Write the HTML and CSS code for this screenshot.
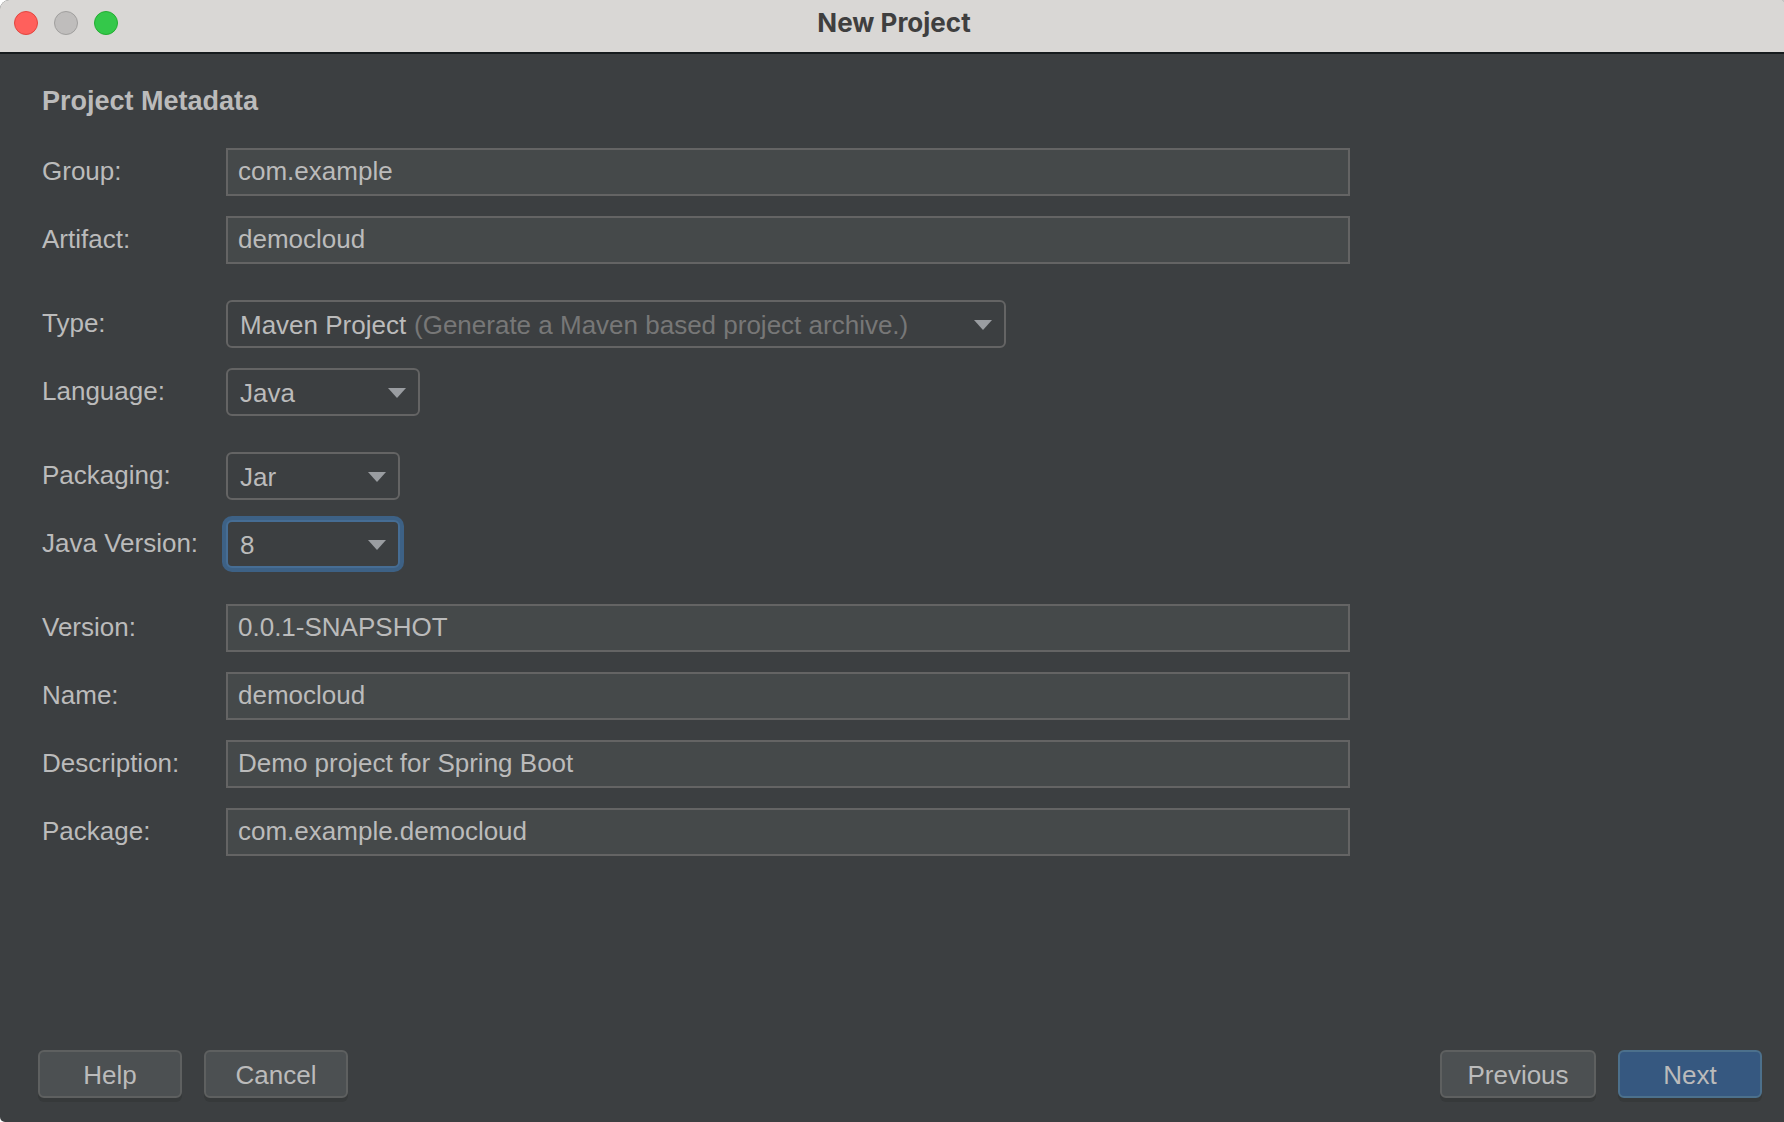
FILE: index.html
```html
<!DOCTYPE html>
<html lang="en">
<head>
  <meta charset="utf-8">
  <meta name="viewport" content="width=device-width, initial-scale=1">
  <title>New Project</title>
  <link rel="stylesheet" href="styles.css">
</head>
<body>
  <main class="window">
    <header class="titlebar">
      <div class="traffic">
        <button type="button" class="light light-close" aria-label="Close"></button>
        <button type="button" class="light light-minimize" aria-label="Minimize" disabled></button>
        <button type="button" class="light light-zoom" aria-label="Zoom"></button>
      </div>
      <h1 class="title">New Project</h1>
    </header>

    <form class="dialog">
      <h2 class="heading">Project Metadata</h2>

      <div class="group">
        <div class="row">
          <label class="label" for="group">Group:</label>
          <input class="field" id="group" type="text" value="com.example">
        </div>
        <div class="row">
          <label class="label" for="artifact">Artifact:</label>
          <input class="field" id="artifact" type="text" value="democloud">
        </div>
      </div>

      <div class="group">
        <div class="row">
          <label class="label" for="type">Type:</label>
          <div class="combo combo-wide">
            <select class="select" id="type" aria-describedby="type-hint">
              <option>Maven Project</option>
            </select>
            <span class="hint" id="type-hint">(Generate a Maven based project archive.)</span>
            <svg class="arrow" viewBox="0 0 18 10" aria-hidden="true"><path d="M0 0h18L9 10z"/></svg>
          </div>
        </div>
        <div class="row">
          <label class="label" for="language">Language:</label>
          <div class="combo combo-medium">
            <select class="select" id="language"><option>Java</option></select>
            <svg class="arrow" viewBox="0 0 18 10" aria-hidden="true"><path d="M0 0h18L9 10z"/></svg>
          </div>
        </div>
      </div>

      <div class="group">
        <div class="row">
          <label class="label" for="packaging">Packaging:</label>
          <div class="combo combo-small">
            <select class="select" id="packaging"><option>Jar</option></select>
            <svg class="arrow" viewBox="0 0 18 10" aria-hidden="true"><path d="M0 0h18L9 10z"/></svg>
          </div>
        </div>
        <div class="row">
          <label class="label" for="java-version">Java Version:</label>
          <div class="combo combo-small">
            <select class="select select-focused" id="java-version"><option>8</option></select>
            <svg class="arrow" viewBox="0 0 18 10" aria-hidden="true"><path d="M0 0h18L9 10z"/></svg>
          </div>
        </div>
      </div>

      <div class="group">
        <div class="row">
          <label class="label" for="version">Version:</label>
          <input class="field" id="version" type="text" value="0.0.1-SNAPSHOT">
        </div>
        <div class="row">
          <label class="label" for="name">Name:</label>
          <input class="field" id="name" type="text" value="democloud">
        </div>
        <div class="row">
          <label class="label" for="description">Description:</label>
          <input class="field" id="description" type="text" value="Demo project for Spring Boot">
        </div>
        <div class="row">
          <label class="label" for="package">Package:</label>
          <input class="field" id="package" type="text" value="com.example.democloud">
        </div>
      </div>
    </form>

    <footer class="actions">
      <button type="button" class="button">Help</button>
      <button type="button" class="button">Cancel</button>
      <button type="button" class="button button-previous">Previous</button>
      <button type="button" class="button button-primary">Next</button>
    </footer>
  </main>
</body>
</html>
```

FILE: styles.css
```css
*, *::before, *::after {
  box-sizing: border-box;
}

body {
  margin: 0;
  background: #ffffff;
  color: #bbbbbb;
  font: 26px/30px "Liberation Sans", Arial, sans-serif;
}

.window {
  display: flex;
  flex-direction: column;
  min-height: 100vh;
  border-radius: 9px 2px 0 5px;
  background: #3c3f41;
  overflow: hidden;
}

.titlebar {
  display: grid;
  grid-template-columns: 1fr auto 1fr;
  align-items: center;
  height: 54px;
  padding: 0 10px 6px 14px;
  border-bottom: 2px solid #161b1d;
  background: #d9d7d5;
}

.traffic {
  display: flex;
  gap: 16px;
}

.light {
  width: 24px;
  height: 24px;
  padding: 0;
  border: 1px solid;
  border-radius: 50%;
}

.light-close {
  border-color: #e2463f;
  background: #ff605c;
}

.light-minimize {
  border-color: #a09f9e;
  background: #bfbdbc;
}

.light-zoom {
  border-color: #23ad32;
  background: #34c84a;
}

.title {
  margin: 0;
  color: #3f3f3f;
  font: 700 26px/30px Inter, sans-serif;
}

.dialog {
  display: flex;
  flex-direction: column;
  gap: 36px;
  padding: 32px 42px;
}

.heading {
  margin: 0 0 -4px;
  font-size: 27px;
  line-height: 30px;
}

.group {
  display: flex;
  flex-direction: column;
  gap: 20px;
}

.row {
  display: grid;
  grid-template-columns: 184px minmax(0, 1124px);
  align-items: center;
}

.label {
  padding-bottom: 2px;
}

.field {
  width: 100%;
  height: 48px;
  padding: 0 10px 2px;
  border: 2px solid #646464;
  border-radius: 0;
  outline: 0;
  background: #45494a;
  color: inherit;
  font: inherit;
}

.combo {
  position: relative;
  max-width: 100%;
}

.combo-wide {
  width: 780px;
}

.combo-medium {
  width: 194px;
}

.combo-small {
  width: 174px;
}

.select {
  display: block;
  width: 100%;
  height: 48px;
  padding: 2px 12px 0;
  border: 2px solid #646464;
  border-radius: 6px;
  outline: 0;
  appearance: none;
  background: #3c3f41;
  color: inherit;
  font: inherit;
}

.select-focused {
  border-color: #466d94;
  box-shadow: 0 0 0 4px #3d6185;
}

.hint {
  position: absolute;
  top: 10px;
  left: 188px;
  color: #777777;
  white-space: nowrap;
  pointer-events: none;
}

.arrow {
  position: absolute;
  top: 20px;
  right: 14px;
  width: 18px;
  height: 10px;
  fill: #9a9da1;
  pointer-events: none;
}

.actions {
  display: flex;
  gap: 22px;
  margin-top: auto;
  padding: 0 22px 24px 38px;
}

.button {
  min-width: 144px;
  height: 48px;
  padding: 2px 24px 0;
  border: 2px solid #5e6060;
  border-radius: 6px;
  background: #4c5052;
  box-shadow: 0 4px 0 #36393a;
  color: inherit;
  font: inherit;
}

.button-previous {
  min-width: 156px;
  margin-left: auto;
}

.button-primary {
  border-color: #4c708c;
  background: #365880;
}
```
